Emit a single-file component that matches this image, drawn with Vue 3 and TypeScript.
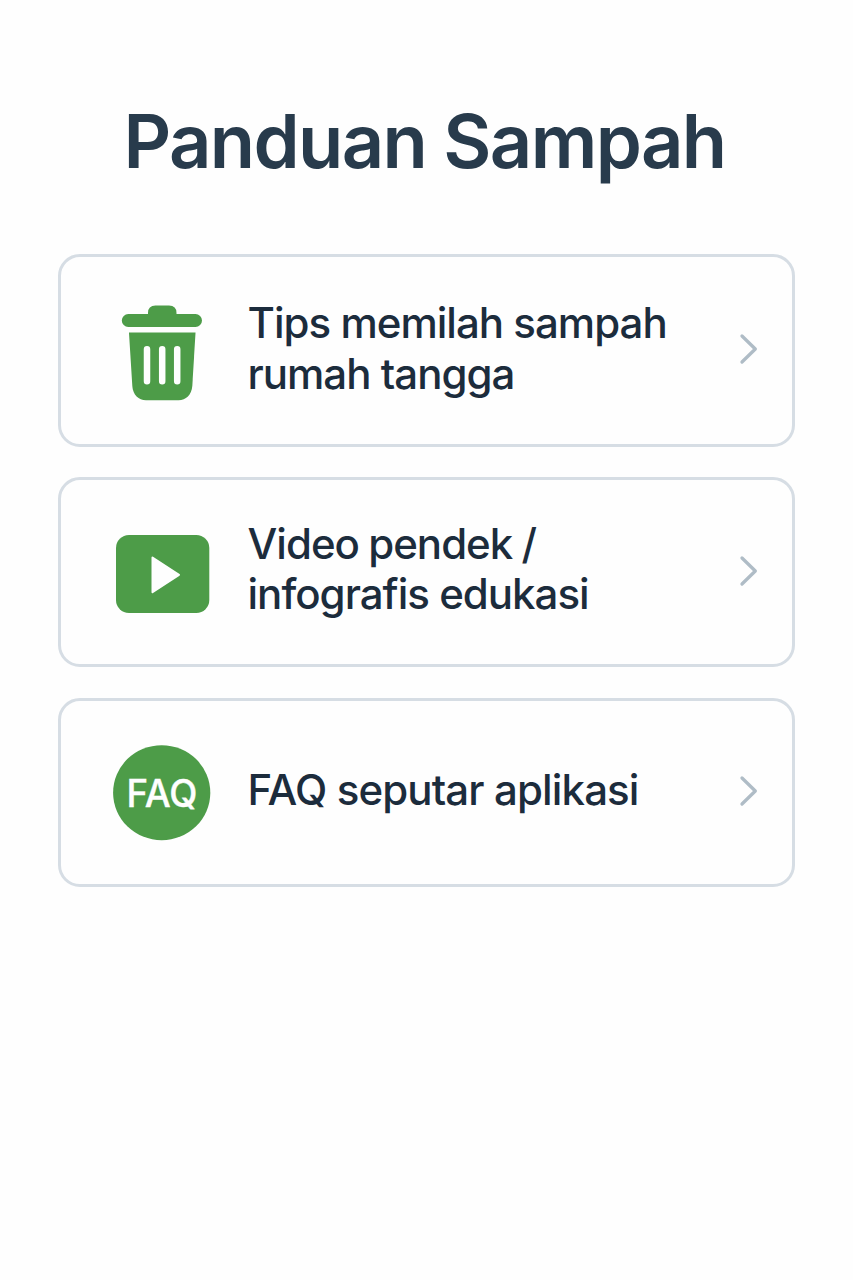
<script setup lang="ts">
interface GuideItem {
  icon: 'bin' | 'video' | 'faq'
  lines: string[]
}

const items: GuideItem[] = [
  { icon: 'bin', lines: ['Tips memilah sampah', 'rumah tangga'] },
  { icon: 'video', lines: ['Video pendek /', 'infografis edukasi'] },
  { icon: 'faq', lines: ['FAQ seputar aplikasi'] },
]
</script>

<template>
  <main class="page">
    <h1 class="title">Panduan Sampah</h1>
    <nav class="list">
      <a v-for="item in items" :key="item.icon" class="card" :class="item.icon">
        <svg v-if="item.icon === 'bin'" class="icon" width="104" height="104" viewBox="0 0 104 104">
          <path class="green" d="M39 15 V14 Q39 6.500 46.500 6.500 H60 Q67.500 6.500 67.500 14 V15 H86.500 A6.500 6.500 0 0 1 86.500 28 H19.300 A6.500 6.500 0 0 1 19.300 15Z" />
          <path class="green" d="M20 33.500 H86.500 L83.300 87 C82.500 96 77 101.200 69.500 101.200 H37 C29.500 101.200 24 96 23.300 87Z" />
          <path class="slots" d="M38 50.300 V82.200 M53.200 50.300 V82.200 M68.200 50.300 V82.200" />
        </svg>
        <svg v-else-if="item.icon === 'video'" class="icon" width="104" height="104" viewBox="0 0 104 104">
          <rect class="green" x="7" y="15" width="93.300" height="78" rx="13" />
          <path class="play" d="M43.500 37.500 L70 54.800 L43.500 72.200Z" />
        </svg>
        <svg v-else class="icon" width="104" height="104" viewBox="0 0 104 104">
          <ellipse class="green" cx="52.700" cy="51.700" rx="48.600" ry="47.500" />
          <text class="faq-text" x="53" y="66.200" text-anchor="middle" textLength="71" lengthAdjust="spacingAndGlyphs">FAQ</text>
        </svg>
        <span class="label"><span v-for="line in item.lines" :key="line" class="line">{{ line }}</span></span>
        <svg class="chevron" width="20" height="32" viewBox="0 0 20 32"><path d="M3 3 L16.300 16 L3 29" /></svg>
      </a>
    </nav>
  </main>
</template>

<style>
body { background: #fefefe; }
</style>

<style scoped>
.page { box-sizing: border-box; min-height: 1280px; padding: 93px 58px 0; font-family: Inter, "Liberation Sans", sans-serif; }
.title { margin: 0; padding-right: 4px; height: 161px; line-height: 96px; font-size: 74px; font-weight: 600; letter-spacing: -1.620px; text-align: center; white-space: nowrap; color: #283b4c; }
.list { display: flex; flex-direction: column; gap: 30px; }
.card { box-sizing: border-box; height: 193px; border: 3px solid #d6dde4; border-radius: 22px; display: flex; align-items: center; padding: 0 33px 0 48px; }
.card.video { height: 190px; margin-bottom: 1px; }
.card.faq { height: 189px; }
.icon { flex: none; }
.green { fill: #4d9c48; }
.slots { fill: none; stroke: #fefefe; stroke-width: 6.500; stroke-linecap: round; }
.play { fill: #fefefe; stroke: #fefefe; stroke-width: 2; stroke-linejoin: round; }
.faq-text { fill: #fefefe; stroke: #fefefe; stroke-width: 0.400; font-size: 37.700px; font-weight: 500; }
.label { flex: 1; margin-left: 34.500px; padding-bottom: 4px; font-size: 42px; line-height: 50.500px; font-weight: 500; letter-spacing: -0.980px; color: #1c2c3c; white-space: nowrap; }
.video .label { padding-bottom: 6px; }
.video .line:first-child { word-spacing: -1px; }
.faq .label { padding-bottom: 5px; letter-spacing: -0.870px; }
.line { display: block; }
.chevron { flex: none; margin-bottom: 3px; fill: none; stroke: #afbcc6; stroke-width: 3.300; stroke-linecap: round; stroke-linejoin: round; }
</style>
